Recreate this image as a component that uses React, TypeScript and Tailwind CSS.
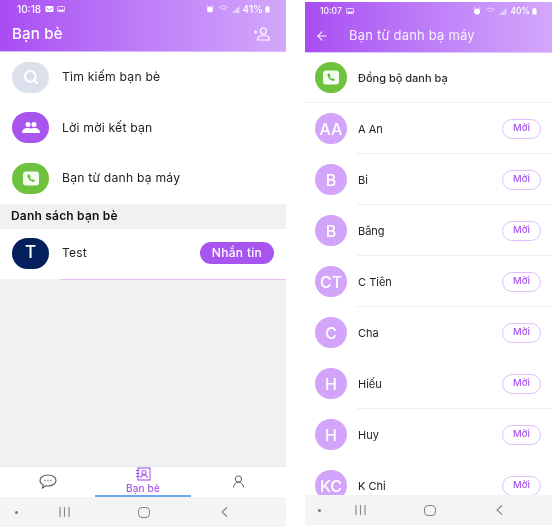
import { ArrowLeft, Search, UserRound } from "lucide-react";

function PhoneBadge({ w, h }: { w: number; h: number }) {
  return (
    <span style={{ width: w, height: h }} className="flex shrink-0 items-center justify-center rounded-full bg-[#6fc23d]">
      <svg width="18" height="15" viewBox="0 0 18 15">
        <rect x="1" y="0.5" width="16" height="14" rx="3" fill="#f4fbef" />
        <path d="M6.2 3.6c-.5.3-.8.8-.7 1.5.3 2.6 2.9 5.3 5.6 5.8.7.1 1.3-.2 1.6-.8l.3-.7-2.2-1.2-.8.8c-1-.4-1.9-1.4-2.3-2.4l.8-.8-1.2-2.4z" fill="#5cb82e" />
      </svg>
    </span>
  );
}

function StatusBar({ time, pct, two, cls }: { time: string; pct: string; two?: boolean; cls: string }) {
  return (
    <div className={`flex items-center text-white ${cls}`}>
      <span>{time}</span>
      <span className="ml-1 flex gap-[3px]">
        {two && (
          <svg width="9" height="6" viewBox="0 0 8 6"><rect width="8" height="6" rx="1" fill="#fff" /><path d="M1 2l3 2 3-2" stroke="#a855f7" strokeWidth="0.8" fill="none" /></svg>
        )}
        <svg width="8" height="6" viewBox="0 0 8 6"><rect x="0.4" y="0.4" width="7.2" height="5.2" rx="1" fill="none" stroke="#fff" strokeWidth="0.8" /><path d="M1 5l2-2 1.5 1.5L6 3l1 2z" fill="#fff" /></svg>
      </span>
      <span className="flex-1" />
      <svg width="8" height="8" viewBox="0 0 8 8" className="mr-[4px]"><circle cx="4" cy="4.4" r="3" fill="#fff" /><path d="M.6 1.6l1.4-1M7.4 1.6L6 .6" stroke="#fff" strokeWidth="0.8" /></svg>
      <svg width="12" height="8" viewBox="0 0 12 8" className="mr-[2px] opacity-70"><path d="M1 3a6 6 0 0 1 9 0M2.8 4.8a3.6 3.6 0 0 1 5.4 0M5.5 7.5h.5" stroke="#fff" strokeWidth="0.9" fill="none" /></svg>
      <svg width="8" height="7" viewBox="0 0 8 7" className="mr-[3px] opacity-50"><path d="M7.5 0v7H0z" fill="#fff" /></svg>
      <span>{pct}</span>
      <svg width="5" height="7" viewBox="0 0 5 7" className="ml-[2px]"><rect x="0.4" y="1" width="4.2" height="5.6" rx="0.7" fill="#fff" /><rect x="1.5" y="0" width="2" height="1.2" fill="#fff" /></svg>
    </div>
  );
}

function NavBar({ cls, a, b, c }: { cls: string; a: string; b: string; c: string }) {
  return (
    <div className={`flex shrink-0 items-center bg-[#f4f4f4] ${cls}`}>
      <span className="h-[3px] w-[3px] rounded-full bg-[#777]" />
      <svg width="11" height="10" viewBox="0 0 11 10" className={a}><path d="M1 0v10M5.500 0v10M10 0v10" stroke="#8a8a8a" strokeWidth="1.2" /></svg>
      <span className={`h-[11px] w-[12px] rounded-[4px] border-[1.5px] border-[#858585] ${b}`} />
      <svg width="7" height="10" viewBox="0 0 7 10" fill="none" stroke="#858585" strokeWidth="1.1" className={c}><path d="M6 .5L1 5l5 4.500" /></svg>
    </div>
  );
}

const FONT = "[font-family:Inter,'Noto_Sans',sans-serif]";

function MenuRow({ icon, label }: { icon: React.ReactNode; label: string }) {
  return (
    <div className="flex h-[50.500px] items-center pl-3">
      {icon}
      <span className="ml-[13px] text-[12.200px] tracking-[0.2px] text-[#222]">{label}</span>
    </div>
  );
}

function Ellipse({ bg, children }: { bg: string; children: React.ReactNode }) {
  return <span className={`flex h-[31px] w-[37px] shrink-0 items-center justify-center rounded-full ${bg}`}>{children}</span>;
}

const contacts = [
  { i: "AA", n: "A An", line: true },
  { i: "B", n: "Bi", line: true },
  { i: "B", n: "Băng", line: true },
  { i: "CT", n: "C Tiên", line: true },
  { i: "C", n: "Cha", line: false },
  { i: "H", n: "Hiếu", line: true },
  { i: "H", n: "Huy", line: false },
  { i: "KC", n: "K Chi", line: false },
];

export default function App() {
  return (
    <div className={`flex h-[527px] w-[554px] overflow-hidden bg-white ${FONT} blur-[0.5px]`}>
      {/* Left phone */}
      <div className="flex h-[527px] w-[286px] shrink-0 flex-col bg-[#f1f1f1]">
        <div className="h-[52px] shrink-0 border-b border-[#dcb8fb] bg-gradient-to-r from-[#a94cf2] to-[#d3a8fb]">
          <StatusBar time="10:18" pct="41%" two cls="h-[17px] pl-[17px] pr-4 pt-[1px] text-[10px] font-medium" />
          <div className="flex h-[34px] items-center justify-between pl-3 pr-4">
            <span className="text-[15px] font-medium tracking-[0.2px] text-white">Bạn bè</span>
            <svg width="16" height="14" viewBox="0 0 16 14" fill="none" stroke="#fff" strokeWidth="1.1">
              <circle cx="9.500" cy="4" r="3" />
              <path d="M3.500 13c0-3 2.500-4.500 6-4.500s6 1.500 6 4.500z" />
              <path d="M0 5h3.500M1.750 3.250v3.500" />
            </svg>
          </div>
        </div>
        <div className="bg-white">
          <MenuRow
            label="Tìm kiếm bạn bè"
            icon={<Ellipse bg="bg-[#dbe1ec]"><Search size={16} strokeWidth={3} className="text-white" /></Ellipse>}
          />
          <MenuRow
            label="Lời mời kết bạn"
            icon={
              <Ellipse bg="bg-[#a855f0]">
                <svg width="18" height="11" viewBox="0 0 18 11" fill="#fff">
                  <circle cx="6" cy="2.600" r="2.500" />
                  <circle cx="12" cy="2.600" r="2.500" />
                  <path d="M0 11c0-3 2-5 6-5 1.300 0 2.300.2 3 .6.700-.4 1.700-.6 3-.6 4 0 6 2 6 5z" />
                </svg>
              </Ellipse>
            }
          />
          <MenuRow label="Bạn từ danh bạ máy" icon={<PhoneBadge w={37} h={31} />} />
        </div>
        <div className="flex h-[25px] items-center bg-[#f1f1f1] pl-[11px] text-[12px] font-semibold tracking-[0.2px] text-[#111]">Danh sách bạn bè</div>
        <div className="flex h-[50px] items-center bg-white px-3 pb-[1px]">
          <span className="flex h-[31px] w-[37px] shrink-0 items-center justify-center rounded-full bg-[#04205c] text-[17px] font-medium text-white">T</span>
          <span className="ml-[13px] flex-1 text-[12px] tracking-[0.2px] text-[#222]">Test</span>
          <span className="flex h-[22px] w-[74px] items-center justify-center rounded-full bg-[#a855f0] text-[12px] font-medium tracking-[0.3px] text-white">Nhắn tin</span>
        </div>
        <div className="ml-[61px] h-px shrink-0 bg-[#e3c0f9]" />
        <div className="flex-1" />
        <div className="grid h-[31px] shrink-0 grid-cols-3 border-t border-[#e8e8e8] bg-white">
          <div className="flex items-center justify-center pb-[2px]">
            <svg width="18" height="15" viewBox="0 0 18 15" fill="none" stroke="#555" strokeWidth="1.1">
              <path d="M9 1c4.400 0 8 2.300 8 5.500S13.400 12 9 12c-.8 0-1.500-.1-2.200-.2L3.500 14l.6-3.200C2.200 9.800 1 8.300 1 6.500 1 3.300 4.600 1 9 1z" />
              <path d="M5.500 6.500h1M8.500 6.500h1M11.500 6.500h1" strokeWidth="1.300" />
            </svg>
          </div>
          <div className="flex flex-col items-center justify-end border-b-2 border-[#6ea8f0]">
            <svg width="16" height="14" viewBox="0 0 16 14" fill="none" stroke="#a855f0" strokeWidth="1.1">
              <rect x="3" y="1" width="12" height="12" />
              <circle cx="9" cy="5.500" r="2" />
              <path d="M5.500 11c.5-2 2-3 3.500-3s3 1 3.500 3M1 3.500h3.500M1 6.500h3.500M1 9.500h3.500" />
            </svg>
            <span className="text-[10px] font-medium leading-[14px] tracking-[0.2px] text-[#a855f0]">Bạn bè</span>
          </div>
          <div className="flex items-center justify-center pb-[2px]">
            <UserRound size={15} strokeWidth={1.500} className="text-[#555]" />
          </div>
        </div>
        <NavBar cls="h-[30px] pl-[15px]" a="ml-[41px]" b="ml-[68px]" c="ml-[71px]" />
      </div>

      {/* Right phone */}
      <div className="ml-[19px] mt-[2px] flex h-[523px] w-[247px] shrink-0 flex-col overflow-hidden bg-white">
        <div className="h-[51px] shrink-0 border-b border-[#e0c4fb] bg-gradient-to-r from-[#a94cf2] to-[#d3a8fb]">
          <StatusBar time="10:07" pct="40%" cls="h-[17px] pl-[15px] pr-[15px] pt-[1px] text-[8.500px] font-medium" />
          <div className="flex h-[33px] items-center pl-[10px]">
            <ArrowLeft size={14} strokeWidth={1.800} className="text-white" />
            <span className="ml-[20px] text-[13px] tracking-[0.2px] text-[#f8f0ff]">Bạn từ danh bạ máy</span>
          </div>
        </div>
        <div className="min-h-0 flex-1 overflow-hidden">
          <div className="flex h-[50px] items-center border-b border-[#f3f3f3] pl-[10px]">
            <PhoneBadge w={32} h={31} />
            <span className="ml-[11px] mt-[2px] text-[11px] font-medium text-[#2a2a2a]">Đồng bộ danh bạ</span>
          </div>
          {contacts.map((c, idx) => (
            <div key={idx} className="relative flex h-[51px] items-center pl-[10px] pr-[11px]">
              <span className="flex h-[31px] w-[32px] shrink-0 items-center justify-center rounded-full bg-[#d2a5fa] text-[16px] font-medium text-white">{c.i}</span>
              <span className="ml-[11px] mt-[2px] flex-1 text-[11px] text-[#222]">{c.n}</span>
              <span className="flex h-[20px] w-[39px] items-center justify-center rounded-full border border-[#dfc0fa] text-[9.500px] font-medium text-[#a855f0]">Mời</span>
              {c.line && <span className="absolute bottom-0 left-[52px] right-0 h-px bg-[#eeeeee]" />}
            </div>
          ))}
        </div>
        <NavBar cls="h-[30px] pl-[13px]" a="ml-[34px]" b="ml-[58px]" c="ml-[60px]" />
      </div>
    </div>
  );
}
